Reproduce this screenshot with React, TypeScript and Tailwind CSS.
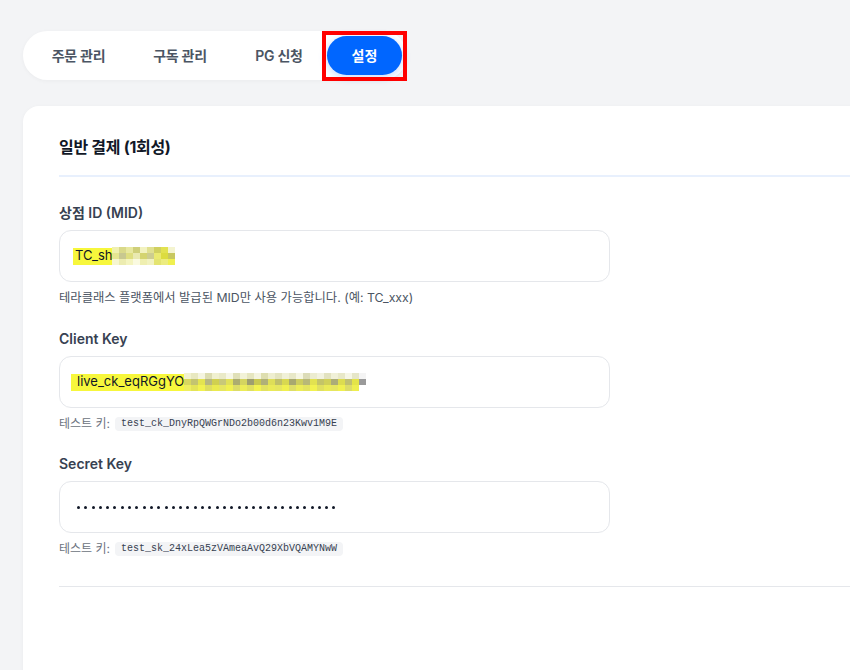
const tabs = [
  { label: "주문 관리", width: "w-[101px]" },
  { label: "구독 관리", width: "w-[102px]" },
  { label: "PG 신청", width: "w-[96px]" },
];

// pixelated (mosaic) cells that hide part of the keys
const midMosaic = [
  ["#f0f0b0", "#d9d98a", "#e8e8a0", "#cfcf7a", "#f2f2c0", "#e0e090", "#d0d060", "#e2e250", "#f4f4d0"],
  ["#e6e690", "#c8c890", "#dede80", "#e9e9b0", "#d4d470", "#cdcd90", "#eaea70", "#dcdc40", "#c8c860"],
  ["#f6f6d0", "#ececb0", "#f4f4c0", "#fafae0", "#efefb0", "#f2f2c0", "#e4e470", "#ecec80", "#f0f050"],
];

const ckMosaic = [
  [
    "#f2f2d0", "#e8e8c0", "#f4f4e0", "#dcdcb0", "#f0f0d0", "#eaeac8", "#f6f6e6", "#e0e0b8", "#f2f2d8", "#e6e6c0",
    "#f4f4e0", "#dedeb0", "#eeeed0", "#e4e4c0", "#f0f0d8", "#e8e8c8", "#f6f6e4", "#dcdcb8", "#ececd0", "#f2f2e0",
    "#e2e2c0", "#f0f0d8", "#e8e8c8", "#f6f6e6", "#e6e6c8", "#f4f4f4",
  ],
  [
    "#d8d860", "#c4c470", "#e4e450", "#b8b880", "#d0d050", "#c8c878", "#e0e058", "#acac70", "#d4d460", "#9e9e70",
    "#c8c850", "#b0b078", "#dede58", "#c0c068", "#d8d850", "#a8a870", "#cccc60", "#b8b878", "#e2e250", "#c4c468",
    "#d0d058", "#acac78", "#dcdc50", "#c0c070", "#e4e448", "#9a9a9a",
  ],
  [
    "#eeee60", "#e4e458", "#f2f250", "#dede60", "#eaea50", "#e6e660", "#f0f050", "#dcdc68", "#ecec58", "#e0e060",
    "#f2f250", "#e2e260", "#eaea58", "#e6e660", "#f0f050", "#dede68", "#ecec58", "#e4e460", "#f2f250", "#e0e060",
    "#eaea58", "#e6e660", "#f0f050", "#dcdc68", "#eeee50", "#ffffff",
  ],
];

const Mosaic = ({ rows }: { rows: string[][] }) => (
  <span className="inline-flex flex-col">
    {rows.map((row, r) => (
      <span key={r} className="flex">
        {row.map((c, i) => (
          <span key={i} className="block h-[6px] w-[7px]" style={{ backgroundColor: c }} />
        ))}
      </span>
    ))}
  </span>
);

const Field = ({
  label,
  className,
  children,
  helper,
}: {
  label: string;
  className: string;
  children: React.ReactNode;
  helper: React.ReactNode;
}) => (
  <div className={className}>
    <p className="text-[14px] font-semibold leading-[20px] text-[#374151]">{label}</p>
    <div className="mt-[7px] flex h-[52px] w-[551px] items-center rounded-xl border border-[#e5e7eb] bg-white px-4 text-[13px] text-[#111827]">
      {children}
    </div>
    <div className="mt-[8px] flex h-[16px] items-center text-[12.3px] leading-[16px] text-[#4b5563]">
      {helper}
    </div>
  </div>
);

const TestKey = ({ value }: { value: string }) => (
  <>
    <span className="text-[12px] text-[#6b7280]">테스트 키:</span>
    <span className="ml-[5px] rounded bg-[#f3f4f6] px-[6px] font-['Liberation_Mono',monospace] text-[10px] leading-[14px] text-[#374151]">
      {value}
    </span>
  </>
);

const App = () => {
  return (
    <div className="h-[670px] w-[850px] overflow-hidden bg-[#f3f4f6] pl-[23px] pt-[31px] font-['Inter','Noto_Sans_CJK_KR',sans-serif]">
      {/* tab bar */}
      <div className="relative inline-flex rounded-full bg-white p-[5px] shadow-[0_1px_4px_rgba(0,0,0,0.04)]">
        {tabs.map((tab) => (
          <button
            key={tab.label}
            className={`${tab.width} h-[39px] text-center text-[14px] font-semibold tracking-[-0.3px] text-[#4b5563]`}
          >
            {tab.label}
          </button>
        ))}
        <button className="h-[39px] w-[75px] rounded-full bg-[#0066ff] text-center text-[14px] font-bold text-white shadow-[0_2px_8px_rgba(0,102,255,0.25)]">
          설정
        </button>
        <div className="absolute right-0 top-0 h-[50px] w-[85px] border-[4px] border-[#ff0000]" />
      </div>

      {/* settings card */}
      <section className="mt-[26px] min-h-[700px] w-[1000px] rounded-2xl bg-white px-[36px] pt-[29px] shadow-[0_1px_4px_rgba(0,0,0,0.04)]">
        <h2 className="border-b-2 border-[#e8f0fd] pb-[16px] text-[16px] font-bold leading-[24px] tracking-[-0.3px] text-[#111827]">
          일반 결제 (1회성)
        </h2>

        <Field
          label="상점 ID (MID)"
          className="mt-[26px]"
          helper={<span>테라클래스 플랫폼에서 발급된 MID만 사용 가능합니다. (예: TC_xxx)</span>}
        >
          <span className="-ml-[3px] flex h-[17px] items-center bg-[#f7f73c] pl-[2px]">
            <span>TC_sh</span>
            <Mosaic rows={midMosaic} />
          </span>
        </Field>

        <Field
          label="Client Key"
          className="mt-[23px]"
          helper={<TestKey value="test_ck_DnyRpQWGrNDo2b00d6n23Kwv1M9E" />}
        >
          <span className="-ml-[5px] flex h-[17px] items-center bg-[#f7f73c] pl-[6px]">
            <span>live_ck_eqRGgYO</span>
            <Mosaic rows={ckMosaic} />
          </span>
        </Field>

        <Field
          label="Secret Key"
          className="mt-[22px]"
          helper={<TestKey value="test_sk_24xLea5zVAmeaAvQ29XbVQAMYNwW" />}
        >
          <span className="flex gap-[4.3px] pl-[1px]" aria-label="password">
            {Array.from({ length: 36 }).map((_, i) => (
              <span key={i} className="block h-[3px] w-[3px] rounded-full bg-[#111827]" />
            ))}
          </span>
        </Field>

        <div className="mt-[29px] border-t border-[#e5e7eb]" />
      </section>
    </div>
  );
};

export default App;
